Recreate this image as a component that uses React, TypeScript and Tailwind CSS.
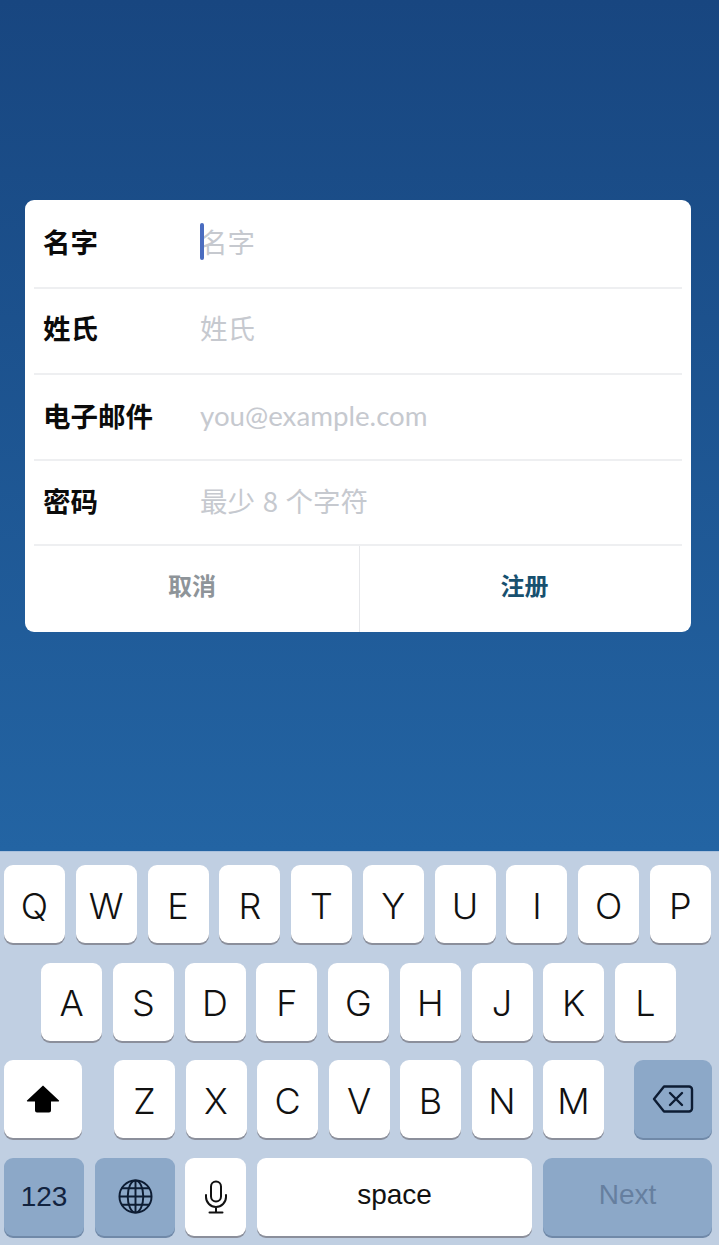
import React from "react";

const CJK = "font-['Noto_Sans_CJK_SC',sans-serif]";

function Row({ label, hint, latin, caret, h, pb }: { label: string; hint: string; latin?: boolean; caret?: boolean; h: string; pb: string }) {
  return (
    <div className={`${h} ${pb} mx-[9px] flex items-center border-b-2 border-[#eeeff1]`}>
      <div className={`w-[166px] pl-[9px] text-[27.5px] font-bold leading-none text-[#0b0b0b] ${CJK}`}>{label}</div>
      <div className={`relative flex items-center text-[#c6c9cf] ${latin ? "font-['Lato',sans-serif] text-[27.7px]" : `${CJK} text-[27.5px] [word-spacing:1.5px]`} leading-none`}>
        {caret && <span className="absolute left-0 top-[-5px] h-[37px] w-[4px] rounded-sm bg-[#4a6cc0]" />}
        <span>{hint}</span>
      </div>
    </div>
  );
}

const base = "flex h-[78px] items-center justify-center rounded-[9px] leading-none";
const light = "bg-white shadow-[0_2px_0_#8b8f9b]";
const dark = "bg-[#8ca8c8] shadow-[0_2px_0_#7089a8]";
const sans = "font-['Liberation_Sans',sans-serif]";

function Letter({ c }: { c: string }) {
  return <div className={`${base} ${light} w-[61px] pt-[3px] font-['Inter',sans-serif] text-[36px] font-light text-[#111]`}>{c}</div>;
}

export default function App() {
  return (
    <div className="flex h-[1245px] w-[719px] flex-col overflow-hidden">
      <div className="h-[851px] bg-gradient-to-b from-[#184680] to-[#2364a3] px-[25px] pt-[200px]">
        <div className="w-[666px] overflow-hidden rounded-[9px] bg-white">
          <Row h="h-[89px]" pb="pb-[3px]" label="名字" hint="名字" caret />
          <Row h="h-[86px]" pb="pb-[6px]" label="姓氏" hint="姓氏" />
          <Row h="h-[86px]" pb="pb-[3px]" label="电子邮件" hint="you@example.com" latin />
          <Row h="h-[85px]" pb="pb-[3px]" label="密码" hint="最少 8 个字符" />
          <div className={`flex h-[86px] text-[24px] font-bold ${CJK}`}>
            <div className="flex w-[334px] items-center justify-center pb-[8px] text-[#8e9499]">取消</div>
            <div className="w-px bg-[#e6e7ea]" />
            <div className="flex flex-1 items-center justify-center pb-[8px] pr-[2px] text-[#17506f]">注册</div>
          </div>
        </div>
      </div>
      <div className="flex flex-1 flex-col gap-[19.5px] border-t border-[#a9c0dc] bg-[#c0cfe2] pl-[4px] pr-[7px] pt-[13px]">
        <div className="mr-px flex justify-between">
          {"QWERTYUIOP".split("").map((k) => <Letter key={k} c={k} />)}
        </div>
        <div className="flex gap-[10.75px] pl-[37px]">
          {"ASDFGHJKL".split("").map((k) => <Letter key={k} c={k} />)}
        </div>
        <div className="flex items-start">
          <div className={`${base} ${light} w-[78px]`}>
            <svg width="34" height="30" viewBox="0 0 34 30"><path d="M17 1.5 33 16.5a.6.6 0 0 1-.4 1H25v9a2 2 0 0 1-2 2H11a2 2 0 0 1-2-2v-9H1.4a.6.6 0 0 1-.4-1Z" fill="#000" /></svg>
          </div>
          <div className="ml-[32px] flex gap-[10.5px]">
            {"ZXCVBNM".split("").map((k) => <Letter key={k} c={k} />)}
          </div>
          <div className={`${base} ${dark} ml-[30px] w-[78px]`}>
            <svg width="42" height="30" viewBox="0 0 42 30" fill="none" stroke="#0d1c33" strokeWidth="2.4" strokeLinejoin="round" strokeLinecap="round">
              <path d="M12 2.5h25a3 3 0 0 1 3 3v19a3 3 0 0 1-3 3H12L2 15Z" />
              <path d="m18 9 12 12M30 9 18 21" />
            </svg>
          </div>
        </div>
        <div className="flex items-start">
          <div className={`${base} ${dark} ${sans} w-[80px] text-[28px] text-[#12233f]`}>123</div>
          <div className={`${base} ${dark} ml-[11px] w-[80px]`}>
            <svg width="35" height="35" viewBox="0 0 36 36" fill="none" stroke="#0d1c33" strokeWidth="2">
              <circle cx="18" cy="18" r="16.5" />
              <ellipse cx="18" cy="18" rx="8" ry="16.5" />
              <path d="M18 1.5v33M1.5 18h33M4 9.5h28M4 26.5h28" />
            </svg>
          </div>
          <div className={`${base} ${light} ml-[10px] w-[61px]`}>
            <svg width="24" height="34" viewBox="0 0 24 34" fill="none" stroke="#111" strokeWidth="2" strokeLinecap="round">
              <rect x="7" y="1.5" width="10" height="20" rx="5" />
              <path d="M2 15v2a10 10 0 0 0 20 0v-2M12 27v5M5.5 32.5h13" />
            </svg>
          </div>
          <div className={`${base} ${light} ${sans} ml-[11px] w-[275px] pb-[3px] text-[28px] text-[#111]`}>space</div>
          <div className={`${base} ${dark} ${sans} ml-[11px] w-[169px] pb-[3px] text-[28px] text-[#667f9f]`}>Next</div>
        </div>
      </div>
    </div>
  );
}
